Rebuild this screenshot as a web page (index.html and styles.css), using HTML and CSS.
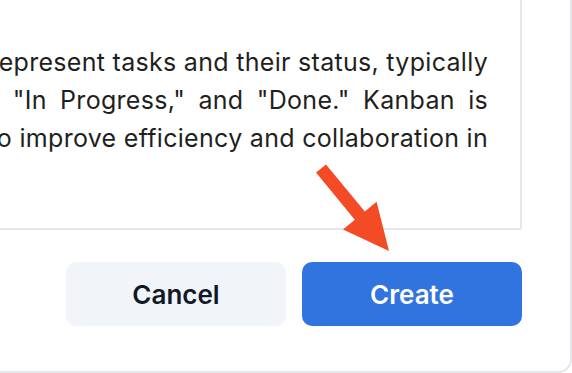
FILE: index.html
```html
<!DOCTYPE html>
<html lang="en">
  <head>
    <meta charset="UTF-8" />
    <meta name="viewport" content="width=device-width, initial-scale=1.0" />
    <title>New Board</title>
    <link rel="stylesheet" href="styles.css">
  </head>
  <body>
    <div class="modal">
      <div class="description">
        <div class="line">Kanban boards use cards to represent tasks and their status, typically</div>
        <div class="line wide">organized in columns like "To Do," "In Progress," and "Done." Kanban is</div>
        <div class="line">widely used in software development to improve efficiency and collaboration in</div>
        <div class="line last">teams.</div>
      </div>
      <div class="actions">
        <button class="btn cancel">Cancel</button>
        <button class="btn create">Create</button>
      </div>
    </div>
    <svg class="pointer" width="110" height="110" viewBox="0 0 110 110">
      <polygon points="16,22.6 26,14.4 64.8,61.5 76.6,51.8 89,101 43,79.4 54.8,69.7" fill="#f34b25" />
    </svg>
  </body>
</html>
```

FILE: styles.css
```css
body {
  margin: 0;
  font-family: Inter, "Noto Sans", sans-serif;
  background-color: #fff;
  overflow: hidden;
  position: relative;
  height: 373px;
}

.modal {
  box-sizing: border-box;
  width: 1072px;
  margin-left: -500px;
  margin-top: -20px;
  padding: 0 48px 45px 0;
  border: 2px solid #e5e7eb;
  border-radius: 14px;
  background-color: #fff;
}

.description {
  margin-top: -2px;
  padding: 61px 32px 33px 0;
  border: 2px solid #e5e7eb;
  border-radius: 2px;
  font-size: 25px;
  letter-spacing: 0.3px;
  line-height: 38px;
  color: #1f1f22;
}

.line {
  white-space: nowrap;
  text-align: right;
}

.line.wide {
  word-spacing: 6px;
}

.line.last {
  text-align: left;
}

.actions {
  display: flex;
  justify-content: flex-end;
  gap: 16px;
  margin-top: 32px;
}

.btn {
  width: 220px;
  height: 64px;
  border: none;
  border-radius: 10px;
  font-family: Inter, "Noto Sans", sans-serif;
  font-size: 26px;
  font-weight: 600;
  cursor: pointer;
}

.cancel {
  background-color: #f1f4f9;
  color: #111827;
}

.create {
  background-color: #3174e0;
  color: #fff;
}

.pointer {
  position: absolute;
  left: 300px;
  top: 150px;
}
```
